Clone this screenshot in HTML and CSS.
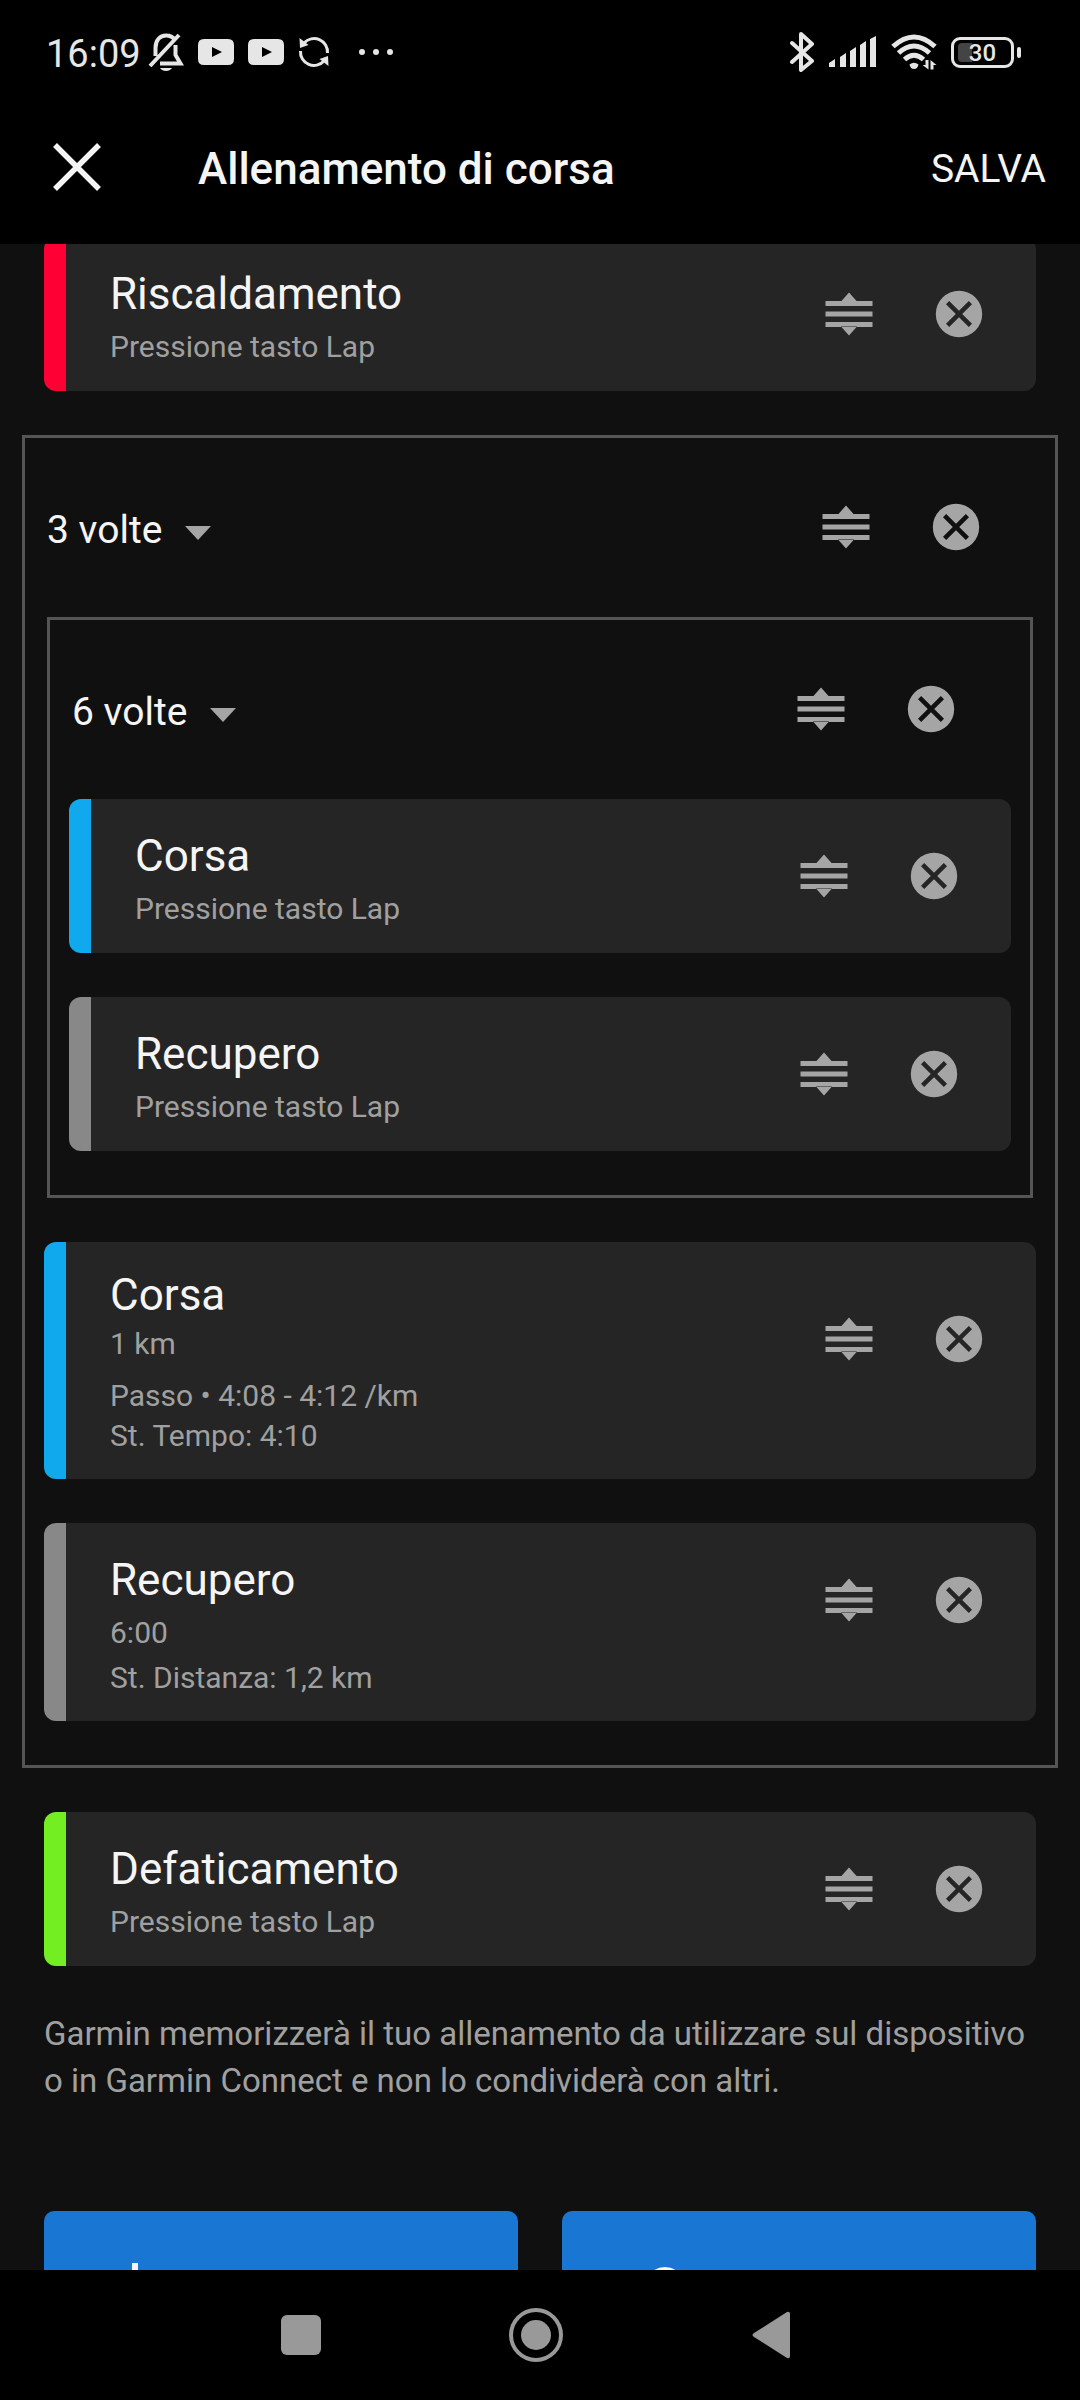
FILE: index.html
```html
<!DOCTYPE html>
<html lang="it">
<head>
    <meta charset="UTF-8">
    <meta name="viewport" content="width=device-width, initial-scale=1.0">
    <title>Allenamento di corsa</title>
    <link rel="stylesheet" href="styles.css">
</head>
<body>
    <!-- shared icons -->
    <svg class="sprite" aria-hidden="true">
        <symbol id="icon-drag" viewBox="0 0 48 48">
            <path d="M24 2.500l8 9H16zM24 45.500l8-9H16zM.5 11h47v5H.5zM.5 21.500h47v5H.5zM.5 32h47v5H.5z" fill="currentColor"/>
        </symbol>
        <symbol id="icon-remove" viewBox="0 0 48 48">
            <path fill-rule="evenodd" fill="currentColor" d="M24 .8a23.200 23.200 0 1 1 0 46.400a23.200 23.200 0 1 1 0-46.400zM14.200 11L11 14.200L20.800 24L11 33.800L14.200 37L24 27.200L33.800 37L37 33.800L27.200 24L37 14.200L33.800 11L24 20.800z"/>
        </symbol>
        <symbol id="icon-youtube" viewBox="0 0 36 26">
            <path fill-rule="evenodd" fill="currentColor" d="M6 0H30Q36 0 36 6V20Q36 26 30 26H6Q0 26 0 20V6Q0 0 6 0zM14 8V18L24 13z"/>
        </symbol>
    </svg>

    <div class="status-bar">
        <div class="status-left">
            <span class="clock">16:09</span>
            <svg class="bell" width="36" height="38" viewBox="0 0 36 38" fill="none" stroke="currentColor" stroke-width="4">
                <path d="M7.500 23V15C7.500 7 12 2.500 18 2.500C22 2.500 25 4 27 7M27.500 12V22L32.500 30.500H12M2 33L31 2"/>
                <path d="M12 35H24Q22 38 18 38Q14 38 12 35z" fill="currentColor" stroke="none"/>
            </svg>
            <svg width="36" height="26"><use href="#icon-youtube"/></svg>
            <svg width="36" height="26"><use href="#icon-youtube"/></svg>
            <svg width="32" height="32" viewBox="0 0 32 32" fill="none" stroke="currentColor" stroke-width="3">
                <path d="M6 7A13.500 13.500 0 0 1 29.500 17M26 25A13.500 13.500 0 0 1 2.500 15"/>
                <path d="M1.500 2L2 12L10.500 9z M30.500 30L30 20L21.500 23z" fill="currentColor" stroke="none"/>
            </svg>
            <svg class="dots" width="36" height="8" viewBox="0 0 36 8" fill="currentColor">
                <circle cx="4" cy="4" r="3"/><circle cx="18" cy="4" r="3"/><circle cx="32" cy="4" r="3"/>
            </svg>
        </div>
        <div class="status-right">
            <svg width="26" height="40" viewBox="0 0 26 40" fill="none" stroke="currentColor" stroke-width="4" stroke-linecap="round" stroke-linejoin="round">
                <path d="M3 11L23 29L12 38V2L23 12L3 30"/>
            </svg>
            <svg width="48" height="32" viewBox="0 0 48 32" fill="currentColor">
                <path d="M0 31V27L6 23V31zM11 31V21L17 17V31zM21 31V15L27 11V31zM31 31V9L37 5V31zM41 31V3L47 0V31z"/>
            </svg>
            <svg width="46" height="36" viewBox="0 0 46 36">
                <g fill="none" stroke="currentColor" stroke-width="5">
                    <path d="M2 12.500Q23 -6.500 44 12.500M7.500 19Q23 5 38.500 19M13.500 25.500Q23 17 32.500 25.500"/>
                </g>
                <path d="M18.500 30.500Q23 27 27.500 30.500Q26.500 35 23 35Q19.500 35 18.500 30.500z" fill="currentColor"/>
                <path d="M37.500 26V35.500L31.500 31H34.500V26zM39.500 35.500V26L45.500 31H42.500V35.500z" fill="currentColor"/>
            </svg>
            <span class="battery"><span>30</span></span>
        </div>
    </div>

    <header class="app-bar">
        <button class="close" aria-label="Chiudi">
            <svg width="48" height="48" viewBox="0 0 48 48" stroke="currentColor" stroke-width="5.500">
                <path d="M2 2L46 46M46 2L2 46"/>
            </svg>
        </button>
        <h1>Allenamento di corsa</h1>
        <button class="save">SALVA</button>
    </header>

    <main>
        <div class="steps">
            <section class="step warmup">
                <div class="step-main">
                    <div class="step-text">
                        <h2>Riscaldamento</h2>
                        <p>Pressione tasto Lap</p>
                    </div>
                    <button class="icon-btn" aria-label="Sposta"><svg><use href="#icon-drag"/></svg></button>
                    <button class="icon-btn" aria-label="Rimuovi"><svg><use href="#icon-remove"/></svg></button>
                </div>
            </section>

            <section class="repeat">
                <div class="repeat-head">
                    <label class="times">
                        <select aria-label="Ripetizioni">
                            <option>2 volte</option>
                            <option selected>3 volte</option>
                            <option>4 volte</option>
                        </select>
                        <svg width="26" height="14" viewBox="0 0 26 14"><path d="M0 0H26L13 14z" fill="currentColor"/></svg>
                    </label>
                    <button class="icon-btn" aria-label="Sposta"><svg><use href="#icon-drag"/></svg></button>
                    <button class="icon-btn" aria-label="Rimuovi"><svg><use href="#icon-remove"/></svg></button>
                </div>

                <section class="repeat">
                    <div class="repeat-head">
                        <label class="times">
                            <select aria-label="Ripetizioni">
                                <option>5 volte</option>
                                <option selected>6 volte</option>
                                <option>7 volte</option>
                            </select>
                            <svg width="26" height="14" viewBox="0 0 26 14"><path d="M0 0H26L13 14z" fill="currentColor"/></svg>
                        </label>
                        <button class="icon-btn" aria-label="Sposta"><svg><use href="#icon-drag"/></svg></button>
                        <button class="icon-btn" aria-label="Rimuovi"><svg><use href="#icon-remove"/></svg></button>
                    </div>

                    <section class="step run">
                        <div class="step-main">
                            <div class="step-text">
                                <h2>Corsa</h2>
                                <p>Pressione tasto Lap</p>
                            </div>
                            <button class="icon-btn" aria-label="Sposta"><svg><use href="#icon-drag"/></svg></button>
                            <button class="icon-btn" aria-label="Rimuovi"><svg><use href="#icon-remove"/></svg></button>
                        </div>
                    </section>

                    <section class="step recovery">
                        <div class="step-main">
                            <div class="step-text">
                                <h2>Recupero</h2>
                                <p>Pressione tasto Lap</p>
                            </div>
                            <button class="icon-btn" aria-label="Sposta"><svg><use href="#icon-drag"/></svg></button>
                            <button class="icon-btn" aria-label="Rimuovi"><svg><use href="#icon-remove"/></svg></button>
                        </div>
                    </section>
                </section>

                <section class="step run">
                    <div class="step-main with-target">
                        <div class="step-text">
                            <h2>Corsa</h2>
                            <p>1 km</p>
                            <p class="target">Passo • 4:08 - 4:12 /km</p>
                        </div>
                        <button class="icon-btn" aria-label="Sposta"><svg><use href="#icon-drag"/></svg></button>
                        <button class="icon-btn" aria-label="Rimuovi"><svg><use href="#icon-remove"/></svg></button>
                    </div>
                    <p class="estimate">St. Tempo: 4:10</p>
                </section>

                <section class="step recovery">
                    <div class="step-main">
                        <div class="step-text">
                            <h2>Recupero</h2>
                            <p>6:00</p>
                        </div>
                        <button class="icon-btn" aria-label="Sposta"><svg><use href="#icon-drag"/></svg></button>
                        <button class="icon-btn" aria-label="Rimuovi"><svg><use href="#icon-remove"/></svg></button>
                    </div>
                    <p class="estimate">St. Distanza: 1,2 km</p>
                </section>
            </section>

            <section class="step cooldown">
                <div class="step-main">
                    <div class="step-text">
                        <h2>Defaticamento</h2>
                        <p>Pressione tasto Lap</p>
                    </div>
                    <button class="icon-btn" aria-label="Sposta"><svg><use href="#icon-drag"/></svg></button>
                    <button class="icon-btn" aria-label="Rimuovi"><svg><use href="#icon-remove"/></svg></button>
                </div>
            </section>
        </div>

        <p class="privacy">Garmin memorizzerà il tuo allenamento da utilizzare sul dispositivo o in Garmin Connect e non lo condividerà con altri.</p>

        <div class="actions">
            <button aria-label="Aggiungi passo">
                <svg width="48" height="50" viewBox="0 0 48 50" stroke="currentColor" stroke-width="6"><path d="M24 0V50M0 25H48"/></svg>
            </button>
            <button aria-label="Aggiungi ripetizione">
                <svg width="72" height="50" viewBox="0 0 72 50" stroke="currentColor" stroke-width="6" fill="none"><circle cx="36" cy="24" r="17"/></svg>
            </button>
        </div>
    </main>

    <nav class="nav-bar">
        <button aria-label="App recenti">
            <svg width="56" height="56" viewBox="0 0 56 56"><rect x="8" y="8" width="40" height="40" rx="6" fill="currentColor"/></svg>
        </button>
        <button aria-label="Home">
            <svg width="56" height="56" viewBox="0 0 56 56"><circle cx="28" cy="28" r="25" fill="none" stroke="currentColor" stroke-width="4"/><circle cx="28" cy="28" r="15" fill="currentColor"/></svg>
        </button>
        <button aria-label="Indietro">
            <svg width="56" height="56" viewBox="0 0 56 56"><path d="M11 26L44 5Q47 4 47 7V49Q47 52 44 51L11 30Q8 28 11 26z" fill="currentColor"/></svg>
        </button>
    </nav>
</body>
</html>
```
FILE: styles.css
```css
* {
    box-sizing: border-box;
}
body {
    margin: 0;
    height: 100vh;
    display: flex;
    flex-direction: column;
    background-color: #101010;
    color: #f5f5f5;
    font-family: Roboto, sans-serif;
}
h1, h2, p {
    margin: 0;
    font-weight: 400;
}
svg {
    display: block;
    flex-shrink: 0;
}
button, select {
    padding: 0;
    border: none;
    background: none;
    color: inherit;
    font-family: inherit;
}
.sprite {
    position: absolute;
    width: 0;
    height: 0;
}

/* status bar */
.status-bar {
    height: 90px;
    padding: 14px 66px 0 46px;
    display: flex;
    justify-content: space-between;
    align-items: center;
    flex-shrink: 0;
    background-color: #000;
    color: #e6e6e6;
}
.status-left, .status-right {
    display: flex;
    align-items: center;
    gap: 14px;
}
.clock {
    padding-top: 4px;
    font-size: 38px;
    line-height: 44px;
}
.bell {
    margin-left: -7px;
}
.dots {
    margin-left: 14px;
}
.battery {
    position: relative;
    width: 63px;
    height: 31px;
    border: 3px solid currentColor;
    border-radius: 9px;
    font-size: 24px;
    line-height: 26px;
    font-weight: 500;
    text-align: center;
}
.battery span {
    position: relative;
}
.battery::before {
    content: "";
    position: absolute;
    left: 4px;
    top: 3px;
    width: 14px;
    height: 19px;
    border-radius: 4px 0 0 4px;
    background-color: #444;
}
.battery::after {
    content: "";
    position: absolute;
    right: -10px;
    top: 7px;
    width: 4px;
    height: 11px;
    border-radius: 2px;
    background-color: currentColor;
}

/* app bar */
.app-bar {
    height: 154px;
    padding: 0 34px 0 53px;
    display: flex;
    align-items: center;
    flex-shrink: 0;
    background-color: #000;
}
.app-bar h1 {
    flex: 1;
    margin-left: 97px;
    padding-top: 4px;
    font-size: 44px;
    line-height: 52px;
    font-weight: 500;
}
.save {
    padding-top: 4px;
    font-size: 39px;
    line-height: 48px;
}

/* list, scrolled a little under the app bar */
main {
    flex: 1;
    min-height: 0;
    overflow: hidden;
}
.steps {
    margin-top: -7px;
    display: flex;
    flex-direction: column;
    gap: 44px;
}
.steps > .step {
    margin: 0 44px;
}
.step {
    border-left: 22px solid;
    border-radius: 12px;
    background: #252525 padding-box;
}
.warmup {
    border-color: #ff0035;
}
.run {
    border-color: #11a9ed;
}
.recovery {
    border-color: #888;
}
.cooldown {
    border-color: #72ee22;
}
.step-main {
    min-height: 154px;
    padding: 0 53px 0 44px;
    display: flex;
    align-items: center;
    gap: 62px;
}
.step-main.with-target {
    min-height: 193px;
}
.step-text {
    flex: 1;
    padding-top: 6px;
}
.step h2 {
    font-size: 44px;
    line-height: 56px;
    margin-bottom: 4px;
}
.with-target h2 {
    margin-bottom: 0;
}
.step p {
    font-size: 30px;
    line-height: 42px;
    color: #a0a0a0;
}
.step .target {
    margin-top: 10px;
}
.step .estimate {
    margin-top: -20px;
    padding: 0 44px 22px;
}
.icon-btn svg {
    width: 48px;
    height: 48px;
    color: #a5a5a5;
}

/* repeat blocks */
.repeat {
    margin: 0 22px;
    padding-bottom: 44px;
    border: 3px solid #555;
}
.repeat > .step {
    margin: 0 19px;
}
.repeat > .step + .step, .repeat > .repeat + .step {
    margin-top: 44px;
}
.repeat-head {
    height: 179px;
    padding: 0 75px 2px 22px;
    display: flex;
    align-items: center;
    gap: 62px;
}
.times {
    flex: 1;
    padding-top: 6px;
    display: flex;
    align-items: center;
    gap: 22px;
}
.times select {
    appearance: none;
    font-size: 39px;
    line-height: 48px;
}
.times svg {
    margin-top: 6px;
    color: #a5a5a5;
}

.privacy {
    margin: 44px 44px 0;
    font-size: 33px;
    line-height: 47px;
    color: #a0a0a0;
}
.actions {
    margin: 107px 44px 0;
    display: flex;
    gap: 44px;
}
.actions button {
    flex: 1;
    height: 154px;
    padding-left: 67px;
    border-radius: 10px;
    background-color: #1976d3;
}

/* system navigation */
.nav-bar {
    height: 130px;
    padding-right: 9px;
    display: flex;
    justify-content: center;
    align-items: center;
    gap: 179px;
    flex-shrink: 0;
    background-color: #000;
    color: #999;
}
```
